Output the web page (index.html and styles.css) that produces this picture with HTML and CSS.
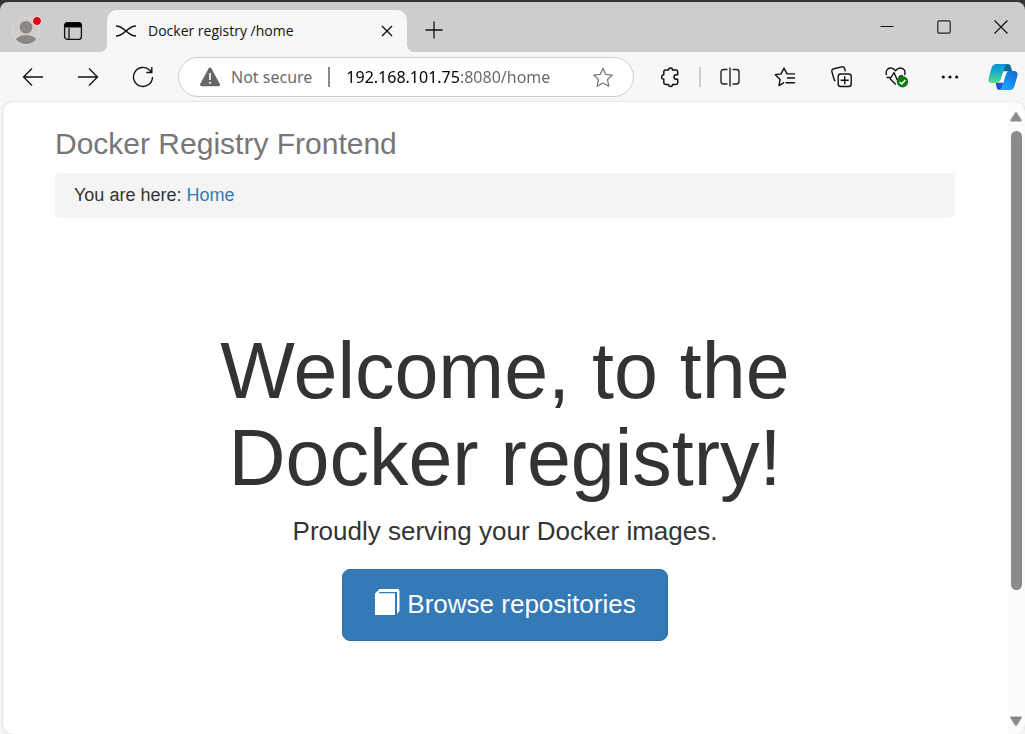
FILE: index.html
```html
<!DOCTYPE html>
<html lang="en">
<head>
<meta charset="utf-8">
<meta name="viewport" content="width=device-width, initial-scale=1">
<title>Docker registry /home</title>
<link rel="stylesheet" href="styles.css">
</head>
<body>
<div class="window">
  <header class="tabstrip">
    <div class="tabstrip-start">
      <button class="icon-btn profile" aria-label="Profile">
        <svg width="32" height="34" viewBox="0 0 32 34"><defs><clipPath id="avatar"><circle cx="16" cy="17" r="13"/></clipPath></defs><circle cx="16" cy="17" r="13.5" fill="#d0cecb" stroke="#dddcda"/><g fill="#8b8784" clip-path="url(#avatar)"><circle cx="16" cy="13.3" r="6.3"/><ellipse cx="16" cy="28" rx="11" ry="7"/></g><circle cx="27" cy="7" r="4.5" fill="#e60012" stroke="#f4eeee"/></svg>
      </button>
      <button class="icon-btn" aria-label="Tab actions">
        <svg width="20" height="20" viewBox="0 0 20 20" fill="none" stroke="#111"><rect x="1.6" y="1.6" width="16.8" height="16.8" rx="3" stroke-width="1.3"/><path d="M1.5 6V4.5a3 3 0 0 1 3-3h11a3 3 0 0 1 3 3V6z" fill="#000"/><path d="M6 7v11.5" stroke-width="1.3"/></svg>
      </button>
    </div>
    <div class="tab">
      <svg class="favicon" width="22" height="14" viewBox="0 0 22 14" fill="none" stroke="#111" stroke-width="1.6"><path d="M1 2c9 0 11 10 20 10M1 12c9 0 11-10 20-10"/></svg>
      <span class="tab-title">Docker registry /home</span>
      <button class="icon-btn tab-close" aria-label="Close tab"><svg width="12" height="12" viewBox="0 0 12 12" stroke="#111" stroke-width="1.4"><path d="M1 1l10 10M11 1L1 11"/></svg></button>
    </div>
    <button class="icon-btn new-tab" aria-label="New tab"><svg width="18" height="18" viewBox="0 0 18 18" stroke="#111" stroke-width="1.3"><path d="M9 .5v17M.5 9h17"/></svg></button>
    <div class="window-controls">
      <button class="icon-btn" aria-label="Minimize"><svg width="14" height="14" viewBox="0 0 14 14" stroke="#111"><path d="M.5 6.5h13"/></svg></button>
      <button class="icon-btn" aria-label="Maximize"><svg width="14" height="14" viewBox="0 0 14 14" fill="none" stroke="#222" stroke-width="1.2"><rect x=".8" y=".8" width="12.4" height="12.4" rx="1.5"/></svg></button>
      <button class="icon-btn" aria-label="Close"><svg width="14" height="14" viewBox="0 0 14 14" stroke="#111" stroke-width="1.2"><path d="M.5.5l13 13M13.5.5l-13 13"/></svg></button>
    </div>
  </header>

  <nav class="toolbar" aria-label="Browser toolbar">
    <div class="tool-group">
      <button class="icon-btn" aria-label="Back"><svg width="22" height="20" viewBox="0 0 22 20" fill="none" stroke="#111" stroke-width="1.3"><path d="M21 10H1.5M10 1.5L1.5 10l8.5 8.5"/></svg></button>
      <button class="icon-btn" aria-label="Forward"><svg width="22" height="20" viewBox="0 0 22 20" fill="none" stroke="#111" stroke-width="1.3"><path d="M1 10h19.5M12 1.5l8.5 8.5-8.5 8.5"/></svg></button>
      <button class="icon-btn" aria-label="Refresh"><svg width="22" height="22" viewBox="0 0 22 22" fill="none" stroke="#111" stroke-width="1.4"><path d="M20.5 11A9.5 9.5 0 1 1 17.8 4.3L19.8 6.3M19.8 1v5.5h-5.5"/></svg></button>
    </div>
    <form class="address">
      <svg width="22" height="20" viewBox="0 0 22 20"><path d="M9.7 1.3a1.5 1.5 0 0 1 2.6 0l8.5 15.8a1.5 1.5 0 0 1-1.3 2.2h-17a1.5 1.5 0 0 1-1.3-2.2z" fill="#666"/><path d="M11 6v7" stroke="#fff" stroke-width="1.6"/><circle cx="11" cy="15.8" r="1.1" fill="#fff"/></svg>
      <label class="security" for="url">Not secure</label>
      <span class="address-divider"></span>
      <input class="url" id="url" type="text" value="192.168.101.75:8080/home" spellcheck="false">
      <button class="icon-btn favorite" type="button" aria-label="Add to favorites"><svg width="22" height="21" viewBox="0 0 22 21" fill="none" stroke="#777" stroke-width="1.3" stroke-linejoin="round"><path d="M11 1.3l2.7 6 6.5.8-4.7 4.4 1.3 6.7-5.8-3.2-5.8 3.2 1.3-6.7L1.8 8.1l6.5-.8z"/></svg></button>
    </form>
    <div class="tool-group tool-group-near">
      <button class="icon-btn" aria-label="Extensions"><svg width="20" height="22" viewBox="0 0 20 22" fill="none" stroke="#111" stroke-width="1.5" stroke-linejoin="round"><path d="M5.500 4h3a2 2 0 1 1 4 0h3.500a1.700 1.700 0 0 1 1.700 1.700v3.100h-1.500a2.200 2.200 0 0 0 0 4.400h1.500v3.600a1.700 1.700 0 0 1-1.700 1.700h-3.500a2 2 0 1 1-4 0h-3a1.700 1.700 0 0 1-1.700-1.700v-3.600a2.200 2.200 0 1 1 0-4.400V5.700A1.700 1.700 0 0 1 5.500 4z"/></svg></button>
      <span class="toolbar-divider"></span>
      <button class="icon-btn" aria-label="Split screen"><svg width="20" height="20" viewBox="0 0 20 20" fill="none" stroke="#222" stroke-width="1.4"><path d="M10 .5v19M7.5 2.5H3.500A2.500 2.500 0 0 0 1 5v9.500A2.500 2.500 0 0 0 3.500 17h4M12.500 2.500h4A2.500 2.500 0 0 1 19 5v9.500a2.500 2.500 0 0 1-2.500 2.500h-4"/></svg></button>
    </div>
    <div class="tool-group tool-group-wide">
      <button class="icon-btn" aria-label="Favorites"><svg width="22" height="20" viewBox="0 0 22 20" fill="none" stroke="#111" stroke-width="1.4" stroke-linejoin="round" stroke-linecap="round"><path d="M9.500 15.800L5 18.600l1.100-6.200L1.300 7.700l5.700-.8 3-5.700 3 5.700h7.500M13.500 11h7M12 15.800h8.500"/></svg></button>
      <button class="icon-btn" aria-label="Collections"><svg width="21" height="22" viewBox="0 0 21 22" fill="none" stroke="#111" stroke-width="1.4"><rect x="7.200" y="8" width="13" height="12.500" rx="2.500"/><path d="M13.700 10.300v8M9.700 14.300h8M4.300 15.200C2.900 14.300 2 9.500 1 6c-.5-2 .5-3 2-3.300l7.500-1.800c2-.5 3 .8 3.300 2l.5 2.500"/></svg></button>
      <button class="icon-btn" aria-label="Browser essentials"><svg width="24" height="22" viewBox="0 0 24 22" fill="none" stroke="#111" stroke-width="1.4" stroke-linejoin="round"><path d="M1.600 9C.2 5 2.500 2 5.500 2c2.200 0 3.700 1 5 2.700C12 3 13.300 2 15.500 2c3.600 0 5.500 3.500 4 7M1.500 11.500H6l3-5 3.500 8 2.500-4.500h3M4.800 12.500l6 6"/><circle cx="17.500" cy="15.800" r="5.700" fill="#107c10" stroke="none"/><path d="M14.700 16l2 2 3.700-4" stroke="#fff" stroke-width="1.5"/></svg></button>
    </div>
    <button class="icon-btn" aria-label="Settings and more"><svg width="18" height="6" viewBox="0 0 18 6" fill="#111"><circle cx="2.300" cy="3" r="1.600"/><circle cx="9" cy="3" r="1.600"/><circle cx="15.700" cy="3" r="1.600"/></svg></button>
    <button class="icon-btn" aria-label="Copilot">
      <svg width="30" height="26" viewBox="0 0 30 26"><defs><linearGradient id="cpA" x1="0" y1="0" x2="0" y2="1"><stop stop-color="#0f93d8"/><stop offset=".45" stop-color="#1caec9"/><stop offset="1" stop-color="#5ddf7c"/></linearGradient><linearGradient id="cpB" x1="1" y1="0" x2="0" y2="1"><stop stop-color="#1866cb"/><stop offset=".5" stop-color="#168bf0"/><stop offset="1" stop-color="#22b8ff"/></linearGradient></defs><path d="M16 0h3.500c2 0 3 1 3.500 3l1.200 4.500H14z" fill="#10699b"/><path d="M7.500 18.500H16L13 26h-1.500c-1.800 0-2.500-1.300-3-3z" fill="#2453d6"/><path d="M8.500 0H20c-2 0-3 1.500-3.700 4L13 15c-.8 2.700-2 4-5 4H4C.5 19 0 16.500.7 14L3.500 4C4.300 1.300 6 0 8.500 0z" fill="url(#cpA)"/><path d="M21.500 7H26c3.500 0 4 2.500 3.300 5l-2.800 10c-.8 2.700-2.300 4-5 4h-11c2 0 3-1.500 3.700-4L17.500 11c.8-2.700 1.500-4 4-4z" fill="url(#cpB)"/><path d="M15.500 7.500H20c-1.300.8-1.900 2-2.500 4l-2.200 7H10.500c1.500-.8 2-2 2.600-4z" fill="#fafafa"/></svg>
    </button>
  </nav>

  <div class="viewport">
    <main class="page">
      <h3 class="brand">Docker Registry Frontend</h3>
      <div class="breadcrumb">You are here: <a href="#home">Home</a></div>
      <section class="jumbotron">
        <h1 class="headline">Welcome, to the Docker registry!</h1>
        <p class="lead">Proudly serving your Docker images.</p>
        <button class="browse" type="button"><svg width="25" height="30" viewBox="0 0 25 30" fill="#fff"><path d="M0 4.500L4.500 0H22.500a2 2 0 0 1 2 2V22L22 25V3H4.500L3.500 4.300H20V26H0z"/></svg><span>Browse repositories</span></button>
      </section>
    </main>
    <div class="scrollbar" aria-hidden="true">
      <svg width="12" height="10" viewBox="0 0 12 10"><path d="M5 .8a1.200 1.200 0 0 1 2 0l4.500 7c.5 1 0 1.700-1 1.700h-9c-1 0-1.500-.7-1-1.700z" fill="#8b8b8b"/></svg>
      <div class="scroll-track"><div class="scroll-thumb"></div></div>
      <svg width="12" height="10" viewBox="0 0 12 10"><path d="M5 9.200a1.200 1.200 0 0 0 2 0l4.500-7c.5-1 0-1.700-1-1.700h-9c-1 0-1.500.7-1 1.700z" fill="#8b8b8b"/></svg>
    </div>
  </div>
</div>
</body>
</html>
```
FILE: styles.css
```css
* { box-sizing: border-box; }

body {
  margin: 0;
  background: #353333;
  font-family: "Liberation Sans", Arial, sans-serif;
  color: #333;
}

button {
  margin: 0;
  padding: 0;
  border: 0;
  background: none;
  font: inherit;
  color: inherit;
}

svg { display: block; flex: none; }

.window {
  display: flex;
  flex-direction: column;
  min-height: 100vh;
  padding-top: 2px;
}

.icon-btn {
  display: flex;
  align-items: center;
  justify-content: center;
  flex: none;
  width: 40px;
  height: 36px;
}

/* Tab strip */
.tabstrip {
  display: flex;
  height: 50px;
  background: #cdcdcd;
  border-radius: 8px 8px 0 0;
}

.tabstrip-start {
  display: flex;
  align-items: center;
  gap: 7px;
  width: 107px;
  padding: 8px 0 0 6px;
}

.tab {
  position: relative;
  display: flex;
  align-items: center;
  width: 300px;
  margin-top: 8px;
  padding: 0 0 0 8px;
  border-radius: 10px 10px 0 0;
  background: #f7f7f7;
  font: 14px/20px "Open Sans", sans-serif;
  color: #111;
}

.tab::before,
.tab::after {
  content: "";
  position: absolute;
  bottom: 0;
  width: 8px;
  height: 8px;
}

.tab::before {
  right: 100%;
  background: radial-gradient(circle at 0 0, #cdcdcd 8px, #f7f7f7 8px);
}

.tab::after {
  left: 100%;
  background: radial-gradient(circle at 100% 0, #cdcdcd 8px, #f7f7f7 8px);
}

.tab-title { flex: 1; padding-left: 11px; }

.new-tab { margin: 10px 0 0 7px; }

.window-controls {
  display: flex;
  gap: 17px;
  margin: 7px 4px 0 auto;
}

/* Toolbar */
.toolbar {
  display: flex;
  align-items: center;
  gap: 13px;
  height: 50px;
  padding: 0 2px 0 13px;
  background: #f7f7f7;
}

.tool-group { display: flex; align-items: center; gap: 15px; }
.tool-group-near { gap: 9px; margin-right: 2px; }
.tool-group-wide { gap: 16px; }

.toolbar-divider { width: 2px; height: 20px; background: #ccc; }

.address {
  display: flex;
  flex: 1;
  align-items: center;
  min-width: 0;
  height: 40px;
  margin: 0 3px 0 2px;
  padding: 0 10px 0 20px;
  border: 1px solid #ccc;
  border-radius: 20px;
  background: #fff;
  font: 16px/24px "Noto Sans", sans-serif;
}

.security { padding-left: 10px; color: #6b6b6b; white-space: nowrap; }

.address-divider {
  flex: none;
  width: 2px;
  height: 20px;
  margin: 0 16px;
  background: #8a8a8a;
}

.url {
  flex: 1;
  min-width: 0;
  padding: 0;
  border: 0;
  outline: 0;
  font: inherit;
  color: transparent;
  background: linear-gradient(90deg, #000 114px, #666 114px);
  -webkit-background-clip: text;
  background-clip: text;
}

/* Page */
.viewport {
  display: flex;
  flex: 1;
  padding-left: 3px;
  background: #f7f7f7;
}

.page {
  flex: 1;
  padding: 25px 52px 93px;
  border-radius: 10px 0 0 10px;
  background: #fff;
  box-shadow: 0 0 2px #bbb;
}

.brand {
  margin: 0 0 13px;
  font-size: 30px;
  font-weight: 400;
  line-height: 33px;
  color: #777;
}

.breadcrumb {
  padding: 10px 19px;
  border-radius: 5px;
  background: #f4f4f4;
  font-size: 18px;
  line-height: 25px;
}

.breadcrumb a { color: #337ab7; text-decoration: none; }

.jumbotron { padding: 109px 75px 0; text-align: center; }

.headline {
  margin: 0 0 12px;
  font-size: 79px;
  font-weight: 400;
  line-height: 87px;
}

.lead { margin: 0 0 19px; font-size: 26px; line-height: 37px; }

.browse {
  display: inline-flex;
  align-items: center;
  gap: 7px;
  padding: 16px 31px 18px 32px;
  border: 1px solid #2e6da4;
  border-radius: 8px;
  background: #337ab7;
  font-size: 26px;
  line-height: 36px;
  color: #fff;
}

.scrollbar {
  display: flex;
  flex-direction: column;
  align-items: center;
  width: 18px;
  padding: 10px 0 8px;
  border-radius: 0 10px 10px 0;
  background: #fcfcfc;
  box-shadow: 1px 0 2px #ddd;
}

.scroll-track { flex: 1; width: 11px; margin: 9px 0 8px; }
.scroll-thumb { height: 79.5%; border-radius: 6px; background: #8b8b8b; }
```
